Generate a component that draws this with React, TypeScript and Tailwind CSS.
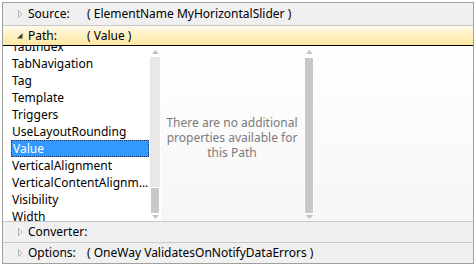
import React from 'react';

const items = [
    'TabIndex',
    'TabNavigation',
    'Tag',
    'Template',
    'Triggers',
    'UseLayoutRounding',
    'Value',
    'VerticalAlignment',
    'VerticalContentAlignm...',
    'Visibility',
    'Width',
];

const Arrow: React.FC<{ open?: boolean }> = ({ open = false }) =>
    open ? (
        <svg width="8" height="8" viewBox="0 0 8 8" className="shrink-0">
            <path d="M1 6.5 L6.5 6.5 L6.5 1 Z" fill="#404040" />
        </svg>
    ) : (
        <svg width="8" height="8" viewBox="0 0 8 8" className="shrink-0">
            <path d="M2.5 0.5 L6 4 L2.5 7.5 Z" fill="none" stroke="#b4b4b4" strokeWidth="1" />
        </svg>
    );

const ScrollBar: React.FC<{ thumbTop: number; thumbHeight: number }> = ({ thumbTop, thumbHeight }) => (
    <div className="w-[12px] flex flex-col shrink-0">
        <div className="h-[11px] flex items-center justify-center">
            <svg width="7" height="4" viewBox="0 0 7 4">
                <path d="M0 4 L3.5 0 L7 4 Z" fill="#c4c4c4" />
            </svg>
        </div>
        <div className="flex-1 bg-[#e8e8e8] mx-[1px] relative">
            <div
                className="absolute left-0 right-0 bg-[#c8c8c8] border border-white"
                style={{ top: thumbTop, height: thumbHeight }}
            />
        </div>
        <div className="h-[8px] flex items-center justify-center">
            <svg width="7" height="4" viewBox="0 0 7 4">
                <path d="M0 0 L7 0 L3.5 4 Z" fill="#c4c4c4" />
            </svg>
        </div>
    </div>
);

const Row: React.FC<{ label: string; value?: string; open?: boolean }> = ({ label, value, open }) => (
    <div className="flex items-center h-full pl-[13px]">
        <Arrow open={open} />
        <span className="ml-[4px] w-[59px]">{label}</span>
        {value && <span>{value}</span>}
    </div>
);

export default function App() {
    return (
        <div className="w-[476px] h-[266px] bg-white text-[12px] text-black" style={{ fontFamily: '"Noto Sans", "Open Sans", sans-serif' }}>
            <div className="ml-[2px] mt-[2px] w-[472px] h-[262px] border border-[#a0a0a0] flex flex-col">
                {/* Source */}
                <div className="h-[23px] bg-[#f0f0f0] border-b border-[#c8c8c8]">
                    <Row label="Source:" value="( ElementName MyHorizontalSlider )" />
                </div>
                {/* Path */}
                <div className="h-[20px] border-b border-black bg-gradient-to-b from-[#fffaea] via-[#fff0c0] to-[#fee7a0]">
                    <Row label="Path:" value="( Value )" open />
                </div>
                {/* Body */}
                <div className="h-[175px] flex">
                    <div className="w-[146px] overflow-hidden bg-white">
                        <div className="-mt-[8px]">
                            {items.map((it) =>
                                it === 'Value' ? (
                                    <div
                                        key={it}
                                        className="h-[17px] ml-[8px] pl-[1px] bg-[#3399ff] text-white border border-dotted border-[#10306a] leading-[15px]"
                                    >
                                        {it}
                                    </div>
                                ) : (
                                    <div key={it} className="h-[17px] pl-[9px] leading-[17px] whitespace-nowrap">
                                        {it}
                                    </div>
                                )
                            )}
                        </div>
                    </div>
                    <ScrollBar thumbTop={130} thumbHeight={27} />
                    <div className="flex-1 flex bg-gradient-to-b from-white to-[#f6f6f6]">
                        <div className="w-[142px] flex items-center justify-center text-center text-[#7a7a7a] leading-[15px] pt-[8px]">
                            <div>
                                There are no additional
                                <br />
                                properties available for
                                <br />
                                this Path
                            </div>
                        </div>
                        <ScrollBar thumbTop={0} thumbHeight={157} />
                    </div>
                </div>
                {/* Converter */}
                <div className="h-[21px] bg-[#f0f0f0] border-t border-[#c8c8c8]">
                    <Row label="Converter:" />
                </div>
                {/* Options */}
                <div className="flex-1 bg-[#f0f0f0] border-t border-[#c8c8c8]">
                    <Row label="Options:" value="( OneWay ValidatesOnNotifyDataErrors )" />
                </div>
            </div>
        </div>
    );
}
